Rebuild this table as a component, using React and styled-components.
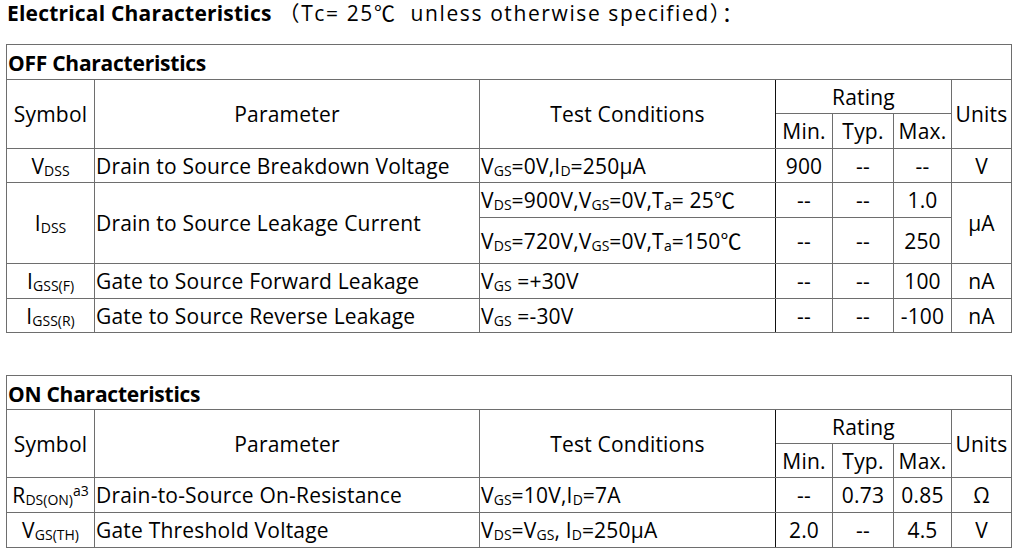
import React from "react";
import styled, { createGlobalStyle } from "styled-components";

const Global = createGlobalStyle`
  html, body { margin: 0; padding: 0; background: #fff; }
  body {
    font-family: "Open Sans", "Noto Sans CJK SC", sans-serif;
    color: #000;
  }
`;

const Page = styled.div`
  width: 1016px;
  padding: 0 0 0 6px;
  box-sizing: border-box;
`;

const Heading = styled.div`
  font-size: 21px;
  letter-spacing: 0.2px;
  line-height: 26px;
  padding: 0 0 0 1px;
  height: 44px;
  white-space: pre;
  & b { font-weight: 700; }
`;

const Note = styled.span`
  letter-spacing: 1.6px;
`;

const Table = styled.table`
  border-collapse: collapse;
  table-layout: fixed;
  width: 1005px;
  margin-bottom: ${(p) => p.$gap || 0}px;
  font-size: 21px;
  letter-spacing: 0.2px;
  line-height: 24px;
`;

const Row = styled.tr`
  height: ${(p) => p.$h}px;
`;

const Cell = styled.td`
  border: 1px solid #6e6e6e;
  border-right-color: ${(p) => (p.$dark ? "#111" : "#6e6e6e")};
  padding: 0 ${(p) => (p.$left ? "1px" : "0")};
  text-align: ${(p) => (p.$left ? "left" : "center")};
  vertical-align: middle;
  white-space: nowrap;
  overflow: hidden;
`;

const TitleCell = styled.td`
  border: 1px solid #6e6e6e;
  padding: 2px 1px 0;
  font-weight: 700;
  letter-spacing: -0.25px;
  text-align: left;
  vertical-align: middle;
`;

const Sub = styled.span`
  font-size: 14px;
  letter-spacing: 0;
  vertical-align: -2px;
  line-height: 0;
`;

const Sup = styled.span`
  font-size: 14px;
  letter-spacing: 0;
  vertical-align: 7px;
  line-height: 0;
`;

const Cols = () => (
  <colgroup>
    <col style={{ width: 88 }} />
    <col style={{ width: 385 }} />
    <col style={{ width: 296 }} />
    <col style={{ width: 57 }} />
    <col style={{ width: 61 }} />
    <col style={{ width: 58 }} />
    <col style={{ width: 60 }} />
  </colgroup>
);

const Header = ({ h1, h2 }) => (
  <>
    <Row $h={h1}>
      <Cell rowSpan={2}>Symbol</Cell>
      <Cell rowSpan={2}>Parameter</Cell>
      <Cell rowSpan={2} $dark>Test Conditions</Cell>
      <Cell colSpan={3}>Rating</Cell>
      <Cell rowSpan={2}>Units</Cell>
    </Row>
    <Row $h={h2}>
      <Cell>Min.</Cell>
      <Cell>Typ.</Cell>
      <Cell>Max.</Cell>
    </Row>
  </>
);

export default function App() {
  return (
    <Page>
      <Global />
      <Heading>
        <b>Electrical Characteristics</b>
        <Note>{" （Tc= 25℃  unless otherwise specified）："}</Note>
      </Heading>

      <Table $gap={42}>
        <Cols />
        <tbody>
          <Row $h={35}>
            <TitleCell colSpan={7}>OFF Characteristics</TitleCell>
          </Row>
          <Header h1={34} h2={35} />
          <Row $h={34}>
            <Cell>V<Sub>DSS</Sub></Cell>
            <Cell $left>Drain to Source Breakdown Voltage</Cell>
            <Cell $left $dark>V<Sub>GS</Sub>=0V,I<Sub>D</Sub>=250μA</Cell>
            <Cell>900</Cell>
            <Cell>--</Cell>
            <Cell>--</Cell>
            <Cell>V</Cell>
          </Row>
          <Row $h={35}>
            <Cell rowSpan={2}>I<Sub>DSS</Sub></Cell>
            <Cell rowSpan={2} $left>Drain to Source Leakage Current</Cell>
            <Cell $left $dark>V<Sub>DS</Sub>=900V,V<Sub>GS</Sub>=0V,T<Sub>a</Sub>=  25℃</Cell>
            <Cell>--</Cell>
            <Cell>--</Cell>
            <Cell>1.0</Cell>
            <Cell rowSpan={2}>μA</Cell>
          </Row>
          <Row $h={46}>
            <Cell $left $dark>V<Sub>DS</Sub>=720V,V<Sub>GS</Sub>=0V,T<Sub>a</Sub>=150℃</Cell>
            <Cell>--</Cell>
            <Cell>--</Cell>
            <Cell>250</Cell>
          </Row>
          <Row $h={35}>
            <Cell>I<Sub>GSS(F)</Sub></Cell>
            <Cell $left>Gate to Source Forward Leakage</Cell>
            <Cell $left $dark>V<Sub>GS</Sub> =+30V</Cell>
            <Cell>--</Cell>
            <Cell>--</Cell>
            <Cell>100</Cell>
            <Cell>nA</Cell>
          </Row>
          <Row $h={34}>
            <Cell>I<Sub>GSS(R)</Sub></Cell>
            <Cell $left>Gate to Source Reverse Leakage</Cell>
            <Cell $left $dark>V<Sub>GS</Sub> =-30V</Cell>
            <Cell>--</Cell>
            <Cell>--</Cell>
            <Cell>-100</Cell>
            <Cell>nA</Cell>
          </Row>
        </tbody>
      </Table>

      <Table>
        <Cols />
        <tbody>
          <Row $h={34}>
            <TitleCell colSpan={7}>ON Characteristics</TitleCell>
          </Row>
          <Header h1={34} h2={34} />
          <Row $h={35}>
            <Cell>R<Sub>DS(ON)</Sub><Sup>a3</Sup></Cell>
            <Cell $left>Drain-to-Source On-Resistance</Cell>
            <Cell $left $dark>V<Sub>GS</Sub>=10V,I<Sub>D</Sub>=7A</Cell>
            <Cell>--</Cell>
            <Cell>0.73</Cell>
            <Cell>0.85</Cell>
            <Cell>Ω</Cell>
          </Row>
          <Row $h={35}>
            <Cell>V<Sub>GS(TH)</Sub></Cell>
            <Cell $left>Gate Threshold Voltage</Cell>
            <Cell $left $dark>V<Sub>DS</Sub>=V<Sub>GS</Sub>, I<Sub>D</Sub>=250μA</Cell>
            <Cell>2.0</Cell>
            <Cell>--</Cell>
            <Cell>4.5</Cell>
            <Cell>V</Cell>
          </Row>
        </tbody>
      </Table>
    </Page>
  );
}
